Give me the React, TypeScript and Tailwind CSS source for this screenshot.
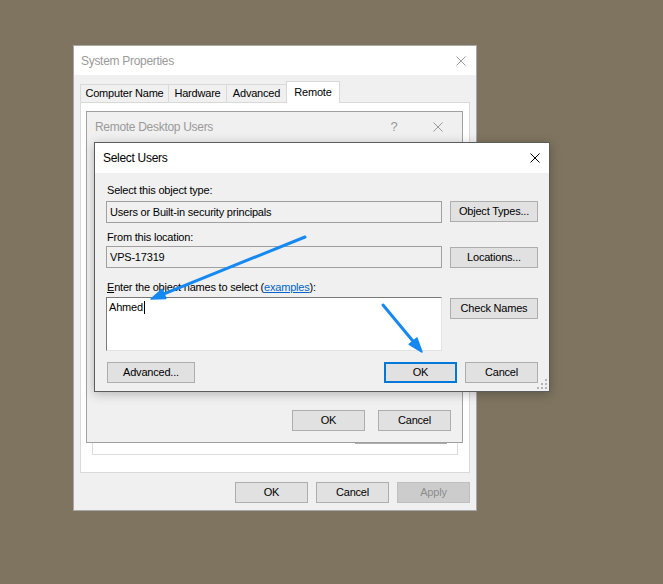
import React from "react";

function XIcon({ color, size = 10 }: { color: string; size?: number }) {
  return (
    <svg width={size} height={size} viewBox="0 0 10 10">
      <path d="M0.5 0.5 L9.5 9.5 M9.5 0.5 L0.5 9.5" stroke={color} strokeWidth="1" fill="none" />
    </svg>
  );
}

function Btn({
  children,
  className = "",
}: {
  children: React.ReactNode;
  className?: string;
}) {
  return (
    <div
      className={
        "flex items-center justify-center h-[21px] bg-[#e1e1e1] border border-[#adadad] text-[11px] tracking-[-0.2px] text-black " +
        className
      }
    >
      {children}
    </div>
  );
}

export default function App() {
  return (
    <div className="relative w-[663px] h-[584px] overflow-hidden bg-[#7e745f] font-['Liberation_Sans',Arial,sans-serif]">
      {/* System Properties window */}
      <div className="absolute left-[73px] top-[45px] w-[404px] h-[466px] border border-[#a8a8a8] bg-[#f0f0f0] flex flex-col">
        <div className="h-[29px] bg-white flex items-center justify-between pl-[7px] pr-[10px]">
          <span className="text-[12px] tracking-[-0.3px] text-[#9a9a9a]">System Properties</span>
          <XIcon color="#9a9a9a" />
        </div>
        <div className="flex-1 flex flex-col px-[6px] pt-[7px] pb-[7px]">
          <div className="relative z-10 flex items-end h-[20px]">
            <div className="w-[89px] h-[18px] border border-b-0 border-[#d9d9d9] flex items-center justify-center text-[11px] tracking-[-0.2px] text-black">
              Computer Name
            </div>
            <div className="-ml-px w-[59px] h-[18px] border border-b-0 border-[#d9d9d9] flex items-center justify-center text-[11px] tracking-[-0.2px] text-black">
              Hardware
            </div>
            <div className="-ml-px w-[61px] h-[18px] border border-b-0 border-[#d9d9d9] flex items-center justify-center text-[11px] tracking-[-0.2px] text-black">
              Advanced
            </div>
            <div className="-ml-px -mb-px w-[54px] h-[22px] bg-white border border-b-0 border-[#d9d9d9] flex items-center justify-center text-[11px] tracking-[-0.2px] text-black">
              Remote
            </div>
          </div>
          <div className="h-[371px] bg-white border border-[#d9d9d9] flex flex-col px-[11px] pt-[20px] pb-[17px]">
            <div className="flex-1 border border-[#dcdcdc] flex flex-col justify-end items-end pr-[10px] pb-[10px]">
              <div className="w-[92px] h-[23px] bg-[#e1e1e1] border border-[#adadad]" />
            </div>
          </div>
          <div className="mt-[9px] flex justify-end gap-[8px]">
            <Btn className="w-[73px]">OK</Btn>
            <Btn className="w-[73px]">Cancel</Btn>
            <div className="w-[73px] h-[21px] flex items-center justify-center bg-[#cccccc] border border-[#bfbfbf] text-[11px] tracking-[-0.2px] text-[#8c8c8c]">
              Apply
            </div>
          </div>
        </div>
      </div>

      {/* Remote Desktop Users dialog */}
      <div className="absolute left-[86px] top-[111px] w-[377px] h-[332px] border border-[#a0a0a0] bg-[#f0f0f0] flex flex-col">
        <div className="h-[30px] flex items-center pl-[8px] pr-[2px]">
          <span className="text-[12px] tracking-[-0.3px] text-[#9a9a9a]">Remote Desktop Users</span>
          <div className="ml-auto flex items-center">
            <div className="w-[44px] flex justify-center text-[13px] text-[#9a9a9a]">?</div>
            <div className="w-[44px] flex justify-center">
              <XIcon color="#9a9a9a" />
            </div>
          </div>
        </div>
        <div className="flex-1 flex items-end justify-end gap-[13px] pr-[11px] pb-[11px]">
          <Btn className="w-[73px]">OK</Btn>
          <Btn className="w-[73px]">Cancel</Btn>
        </div>
      </div>

      {/* Select Users dialog */}
      <div className="absolute left-[94px] top-[142px] w-[456px] h-[250px] border border-[#5c5c5c] bg-[#f0f0f0] flex flex-col shadow-[0_2px_10px_rgba(0,0,0,0.25)]">
        <div className="h-[30px] bg-white flex items-center justify-between pl-[8px] pr-[9px]">
          <span className="text-[12px] tracking-[-0.3px] text-black">Select Users</span>
          <XIcon color="#000000" />
        </div>
        <div className="relative flex-1 flex flex-col pl-[11px] pr-[10px] pt-[10px] text-[11px] tracking-[-0.2px] text-black">
          <div className="h-[14px] leading-[14px] pl-px">Select this object type:</div>
          <div className="mt-[4px] grid grid-cols-[336px_1fr] gap-x-[8px] items-start">
            <div className="h-[22px] border border-[#a0a0a0] flex items-center pl-[3px]">
              Users or Built-in security principals
            </div>
            <Btn className="w-[88px]">Object Types...</Btn>
          </div>
          <div className="mt-[7px] h-[14px] leading-[14px] pl-px">From this location:</div>
          <div className="mt-[2px] grid grid-cols-[336px_1fr] gap-x-[8px] items-start">
            <div className="h-[22px] border border-[#a0a0a0] flex items-center pl-[3px]">VPS-17319</div>
            <Btn className="w-[88px] mt-px">Locations...</Btn>
          </div>
          <div className="mt-[12px] h-[14px] leading-[14px] pl-px">
            <span className="underline">E</span>nter the object names to select (
            <span className="text-[#0066cc] underline">examples</span>):
          </div>
          <div className="mt-[3px] grid grid-cols-[336px_1fr] gap-x-[8px] items-start">
            <div className="h-[54px] bg-white border border-t-[#7a7a7a] border-l-[#7a7a7a] border-b-[#e3e3e3] border-r-[#e3e3e3] pl-[2px] pt-[2px]">
              <div className="h-[14px] leading-[14px] flex items-center">
                <span>Ahmed</span>
                <span className="inline-block w-px h-[13px] bg-black ml-px" />
              </div>
            </div>
            <Btn className="w-[88px] mt-px">Check Names</Btn>
          </div>
          <div className="mt-[11px] flex items-center pl-px">
            <Btn className="w-[88px]">Advanced...</Btn>
            <div className="ml-auto mr-px flex gap-[8px]">
              <div className="w-[73px] h-[21px] flex items-center justify-center bg-[#e1e1e1] border-2 border-[#0078d7]">OK</div>
              <Btn className="w-[73px]">Cancel</Btn>
            </div>
          </div>
          <svg className="absolute right-[1px] bottom-[1px]" width="11" height="11" viewBox="0 0 11 11">
            <rect x="8" y="0" width="2" height="2" fill="#b4b4b4" />
            <rect x="4" y="4" width="2" height="2" fill="#b4b4b4" />
            <rect x="8" y="4" width="2" height="2" fill="#b4b4b4" />
            <rect x="0" y="8" width="2" height="2" fill="#b4b4b4" />
            <rect x="4" y="8" width="2" height="2" fill="#b4b4b4" />
            <rect x="8" y="8" width="2" height="2" fill="#b4b4b4" />
          </svg>
        </div>
      </div>

      {/* annotation arrows */}
      <svg className="absolute left-0 top-0 pointer-events-none" width="663" height="584" viewBox="0 0 663 584">
        <line x1="305" y1="237" x2="164" y2="293.8" stroke="#1588f2" strokeWidth="3" strokeLinecap="round" />
        <polygon points="151,299 165.9,298.4 162.1,289.2" fill="#1588f2" stroke="#1588f2" strokeWidth="1.5" strokeLinejoin="round" />
        <line x1="383" y1="305" x2="413.1" y2="341.2" stroke="#1588f2" strokeWidth="3" strokeLinecap="round" />
        <polygon points="422,352 409.2,344.4 416.9,338" fill="#1588f2" stroke="#1588f2" strokeWidth="1.5" strokeLinejoin="round" />
      </svg>
    </div>
  );
}
